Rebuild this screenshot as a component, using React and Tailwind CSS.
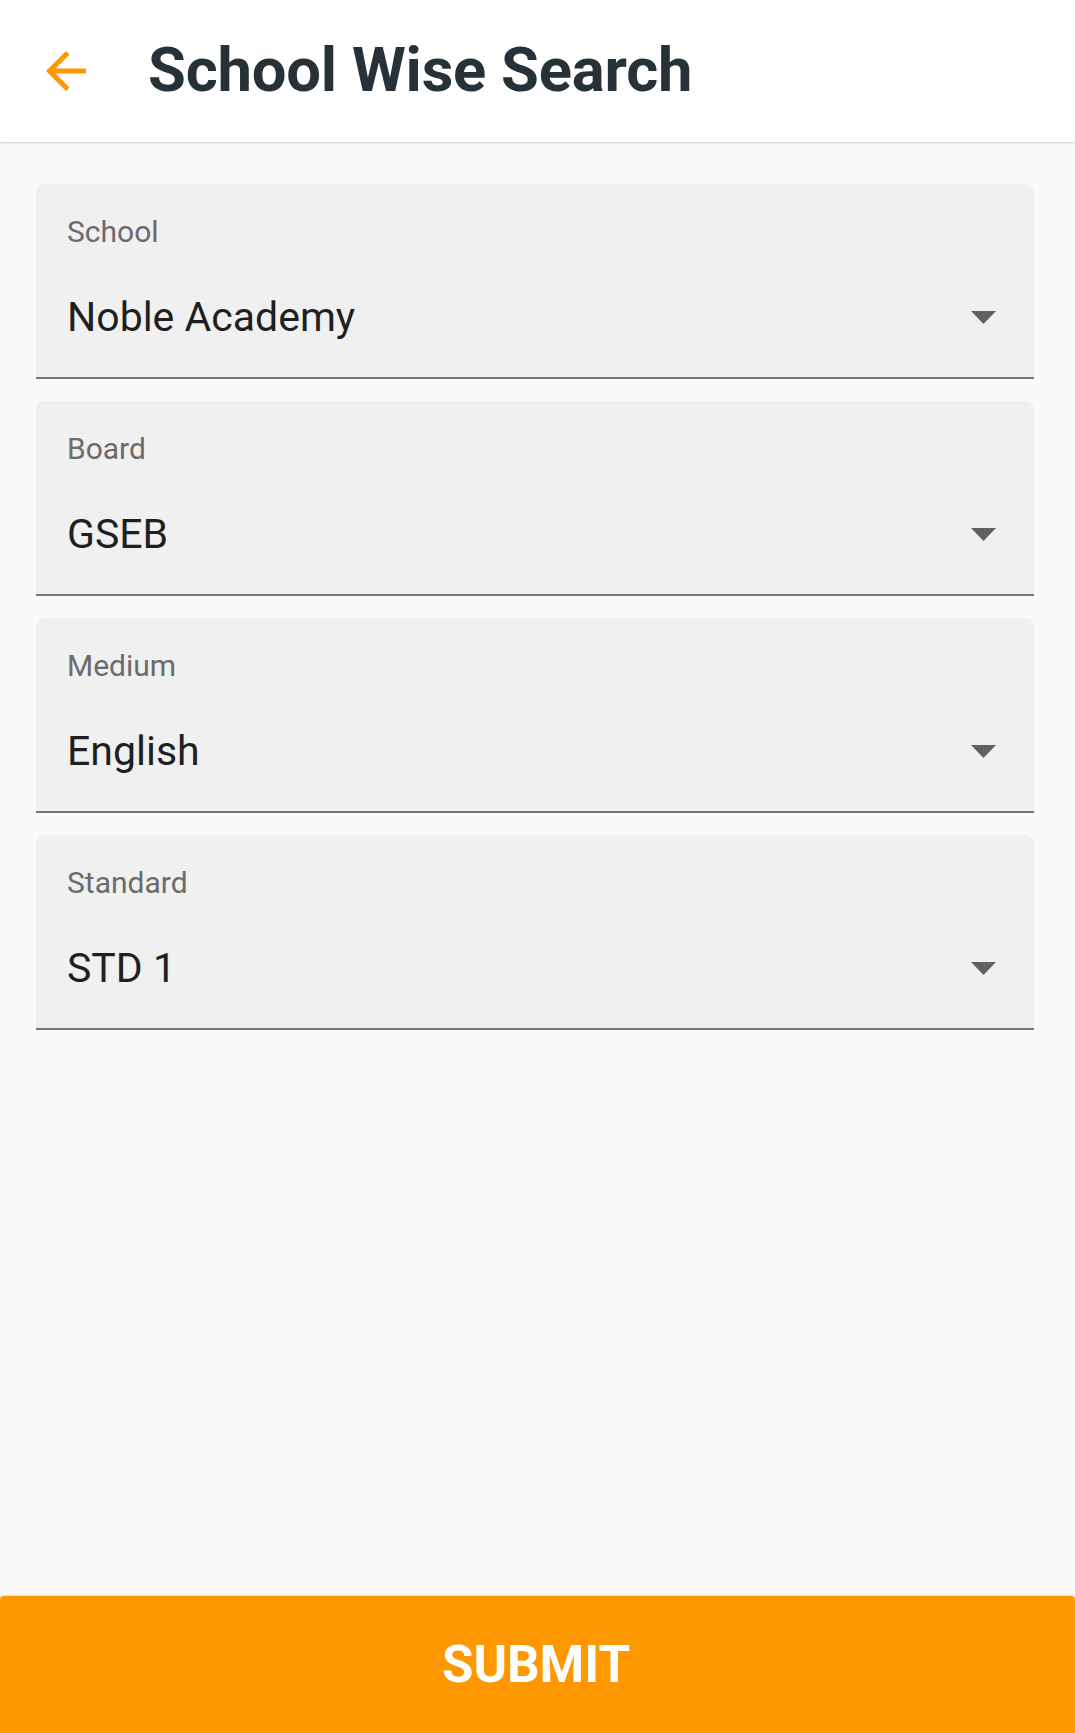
import React from "react";

const fields = [
  { label: "School", value: "Noble Academy" },
  { label: "Board", value: "GSEB" },
  { label: "Medium", value: "English" },
  { label: "Standard", value: "STD 1" },
];

function Field({ label, value }) {
  return (
    <div className="h-[195px] w-[998px] rounded-t-[8px] bg-[#f0f0f0] border-b-2 border-[#767676] pl-[31px] pt-[30px] flex flex-col">
      <div className="text-[30px] leading-[36px] text-[#6b6b6b]">{label}</div>
      <div className="mt-[42px] h-[50px] flex items-center justify-between pr-[38px]">
        <span className="text-[41px] leading-[50px] text-[#1f1f1f]">{value}</span>
        <svg width="25" height="13" viewBox="0 0 25 13" className="block">
          <polygon points="0,0 25,0 12.5,13" fill="#616161" />
        </svg>
      </div>
    </div>
  );
}

export default function App() {
  return (
    <div className="h-[1733px] w-full bg-[#fafafa] flex flex-col overflow-hidden" style={{ fontFamily: "Roboto, 'Noto Sans', sans-serif" }}>
      <header className="h-[142px] bg-white flex items-center shadow-[0_1px_2px_rgba(0,0,0,0.18)] relative z-10">
        <svg width="60" height="60" viewBox="0 0 24 24" className="ml-[36px] block">
          <path d="M20 11H7.83l5.59-5.59L12 4l-8 8 8 8 1.41-1.41L7.83 13H20v-2z" fill="#ff9800" />
        </svg>
        <h1 className="ml-[52px] text-[61.5px] font-bold text-[#263238] leading-none tracking-[-0.2px]">School Wise Search</h1>
      </header>
      <main className="pt-[42px] pl-[36px] flex flex-col gap-[22px]">
        {fields.map((f) => (
          <Field key={f.label} {...f} />
        ))}
      </main>
      <button className="mt-auto h-[137px] w-full bg-[#ff9800] rounded-t-[4px] flex items-center justify-center shadow-[0_-1px_2px_rgba(0,0,0,0.12)]">
        <span className="text-[51px] font-bold text-white leading-none -ml-[3px]">SUBMIT</span>
      </button>
    </div>
  );
}
